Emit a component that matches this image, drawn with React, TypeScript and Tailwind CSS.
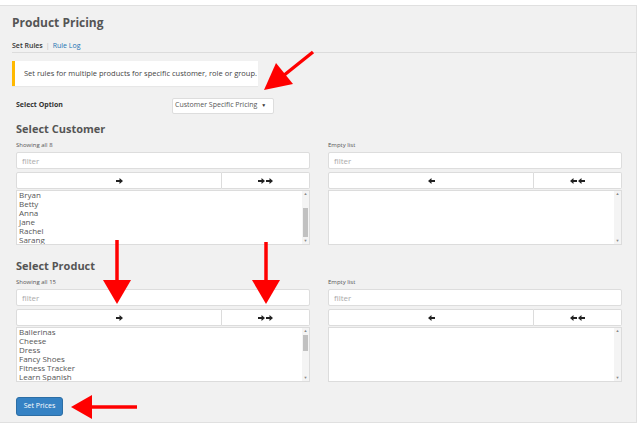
import React from "react";

const font = { fontFamily: '"Open Sans", "Noto Sans", sans-serif' };

function Arrow({ dir }: { dir: "left" | "right" }) {
  return (
    <svg width="7" height="6" viewBox="0 0 7 6" className={dir === "left" ? "rotate-180" : ""}>
      <path d="M0 2h3.5V0L7 3 3.5 6V4H0z" fill="#222" />
    </svg>
  );
}

function MoveButtons({ dir }: { dir: "left" | "right" }) {
  return (
    <div className="flex h-[17px] mt-[3px]">
      <div className="w-[206px] bg-white border border-[#dcdcdc] rounded-l-[2px] flex items-center justify-center">
        <Arrow dir={dir} />
      </div>
      <div className="flex-1 bg-white border border-l-0 border-[#dcdcdc] rounded-r-[2px] flex items-center justify-center gap-[1px]">
        <Arrow dir={dir} />
        <Arrow dir={dir} />
      </div>
    </div>
  );
}

function ListBox({ items, thumbTop, thumbH, offset }: { items: string[]; thumbTop: number; thumbH: number; offset: number }) {
  return (
    <div className="h-[55px] mt-[1px] bg-white border border-[#dcdcdc] flex overflow-hidden">
      <div className="flex-1 overflow-hidden pl-[2px]">
        <div style={{ marginTop: offset }}>
          {items.map((i) => (
            <div key={i} className="text-[8px] leading-[9px] text-[#555]">
              {i}
            </div>
          ))}
        </div>
      </div>
      <div className="w-[7px] bg-[#f4f4f4] relative flex flex-col justify-between items-center">
        <span className="text-[4px] leading-[6px] text-[#888]">▲</span>
        {items.length > 0 && (
          <div className="absolute left-[1px] w-[5px] bg-[#c1c1c1]" style={{ top: thumbTop, height: thumbH }} />
        )}
        <span className="text-[4px] leading-[6px] text-[#888]">▼</span>
      </div>
    </div>
  );
}

function Column({ label, dir, items, thumbTop, thumbH, offset }: { label: string; dir: "left" | "right"; items: string[]; thumbTop: number; thumbH: number; offset: number }) {
  return (
    <div className="w-[294px]">
      <div className="text-[6px] leading-[8px] text-[#555] h-[8px]">{label}</div>
      <div className="mt-[3px] h-[17px] bg-white border border-[#dddddd] rounded-[2px] pl-[5px] flex items-center text-[8px] text-[#aaa]">
        filter
      </div>
      <MoveButtons dir={dir} />
      <ListBox items={items} thumbTop={thumbTop} thumbH={thumbH} offset={offset} />
    </div>
  );
}

const customers = ["Bryan", "Betty", "Anna", "Jane", "Rachel", "Sarang"];
const products = ["Ballerinas", "Cheese", "Dress", "Fancy Shoes", "Fitness Tracker", "Learn Spanish"];

export default function App() {
  return (
    <div className="w-[642px] h-[426px] bg-white relative overflow-hidden" style={font}>
      <div className="mt-[5px] w-[637px] h-[418px] bg-[#f1f1f1] border-t border-r border-b border-[#e0e0e0]">
        {/* Title + tabs */}
        <div className="pl-[12px] pt-[10px] text-[12px] leading-[14px] font-bold text-[#555]">Product Pricing</div>
        <div className="ml-[12px] mt-[11px] h-[12px] border-b border-[#dcdcdc] flex items-start text-[7px] leading-[10px]">
          <span className="text-[#333] font-semibold">Set Rules</span>
          <span className="text-[#bbb] mx-[3px]">|</span>
          <span className="text-[#2271b1]">Rule Log</span>
        </div>

        {/* Notice */}
        <div className="ml-[12px] mt-[8px] w-[246px] h-[25px] bg-white border-l-[3px] border-[#ffb900] pl-[9px] flex items-center text-[7.5px] text-[#444] shadow-[0_1px_1px_rgba(0,0,0,0.04)]">
          Set rules for multiple products for specific customer, role or group.
        </div>

        {/* Select option */}
        <div className="ml-[16px] mt-[11px] h-[17px] flex items-center">
          <span className="w-[156px] text-[7px] font-bold text-[#333]">Select Option</span>
          <div className="w-[102px] h-[16px] bg-white border border-[#dddddd] rounded-[2px] flex items-center pl-[2px] gap-[4px] text-[7px] text-[#555]">
            Customer Specific Pricing
            <span className="text-[5px] text-[#333]">▼</span>
          </div>
        </div>

        {/* Select Customer */}
        <div className="pl-[16px] pr-[14px]">
          <div className="mt-[8px] text-[11px] leading-[14px] font-bold text-[#555]">Select Customer</div>
          <div className="mt-[5px] flex gap-[18px]">
            <Column label="Showing all 8" dir="right" items={customers} thumbTop={17} thumbH={29} offset={-1.5} />
            <Column label="Empty list" dir="left" items={[]} thumbTop={0} thumbH={0} offset={0} />
          </div>

          <div className="mt-[14px] text-[11px] leading-[14px] font-bold text-[#555]">Select Product</div>
          <div className="mt-[5px] flex gap-[18px]">
            <Column label="Showing all 15" dir="right" items={products} thumbTop={7} thumbH={16} offset={-1} />
            <Column label="Empty list" dir="left" items={[]} thumbTop={0} thumbH={0} offset={0} />
          </div>

          <button className="mt-[15px] w-[47px] h-[19px] bg-[#3582c4] border border-[#2c6ea5] rounded-[3px] text-white text-[7px] flex items-center justify-center">
            Set Prices
          </button>
        </div>
      </div>

      {/* red annotation arrows */}
      <svg className="absolute inset-0 pointer-events-none" width="642" height="426">
        <g fill="#ff0000" stroke="#ff0000">
          <line x1="313" y1="52" x2="283" y2="76" strokeWidth="3.5" />
          <polygon points="264,90 276,63 293,84" stroke="none" />
          <line x1="117" y1="240" x2="117" y2="282" strokeWidth="3.5" />
          <polygon points="103,280 131,280 117,304" stroke="none" />
          <line x1="266" y1="242" x2="266" y2="282" strokeWidth="3.5" />
          <polygon points="252,280 280,280 266,304" stroke="none" />
          <line x1="137" y1="407" x2="90" y2="407" strokeWidth="3.5" />
          <polygon points="71,407 92,395 92,419" stroke="none" />
        </g>
      </svg>
    </div>
  );
}
